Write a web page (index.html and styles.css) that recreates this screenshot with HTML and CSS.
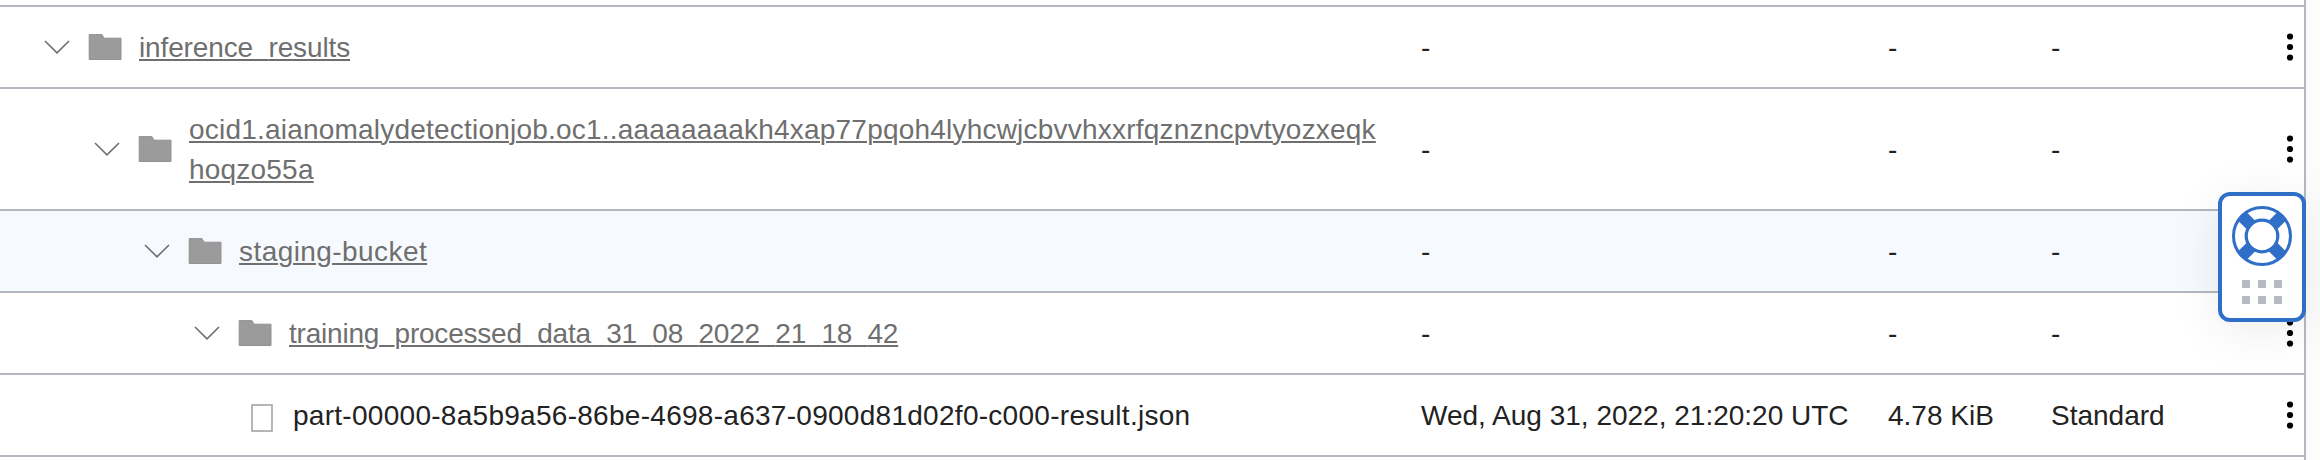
FILE: index.html
```html
<!DOCTYPE html>
<html lang="en">
<head>
<meta charset="utf-8">
<title>Bucket objects</title>
<link rel="stylesheet" href="styles.css">
</head>
<body>
<svg class="defs" aria-hidden="true">
  <symbol id="chevron" viewBox="0 0 26 14"><path d="M1 1 L13 12.8 L25 1" fill="none" stroke="#6f6f6f" stroke-width="1.6"/></symbol>
  <symbol id="folder" viewBox="0 0 34 28"><path d="M1.2 1.6 H14 L16 5.2 H33 V26.5 H1.2 Z" fill="#9b9b9b" stroke="#929292" stroke-width="1"/></symbol>
  <symbol id="file" viewBox="0 0 22 28"><rect x="1" y="1" width="20" height="26" fill="#fff" stroke="#a4a4a4" stroke-width="1.6"/></symbol>
  <symbol id="kebab" viewBox="0 0 8 30"><circle cx="4" cy="4.5" r="3.1"/><circle cx="4" cy="15" r="3.1"/><circle cx="4" cy="25.5" r="3.1"/></symbol>
</svg>
<main class="table">
  <div class="row">
    <div class="name level-1"><svg class="chevron"><use href="#chevron"/></svg><svg class="folder"><use href="#folder"/></svg><a class="link results">inference<span class="us">_</span>results</a></div>
    <span class="cell">-</span><span class="cell">-</span><span class="cell">-</span><svg class="kebab"><use href="#kebab"/></svg>
  </div>
  <div class="row">
    <div class="name level-2"><svg class="chevron"><use href="#chevron"/></svg><svg class="folder"><use href="#folder"/></svg><a class="link job">ocid1.aianomalydetectionjob.oc1..aaaaaaaakh4xap77pqoh4lyhcwjcbvvhxxrfqznzncpvtyozxeqk<br>hoqzo55a</a></div>
    <span class="cell">-</span><span class="cell">-</span><span class="cell">-</span><svg class="kebab"><use href="#kebab"/></svg>
  </div>
  <div class="row hovered">
    <div class="name level-3"><svg class="chevron"><use href="#chevron"/></svg><svg class="folder"><use href="#folder"/></svg><a class="link staging">staging-bucket</a></div>
    <span class="cell">-</span><span class="cell">-</span><span class="cell">-</span><svg class="kebab"><use href="#kebab"/></svg>
  </div>
  <div class="row">
    <div class="name level-4"><svg class="chevron"><use href="#chevron"/></svg><svg class="folder"><use href="#folder"/></svg><a class="link training">training<span class="us">_</span>processed<span class="us">_</span>data<span class="us">_</span>31<span class="us">_</span>08<span class="us">_</span>2022<span class="us">_</span>21<span class="us">_</span>18<span class="us">_</span>42</a></div>
    <span class="cell">-</span><span class="cell">-</span><span class="cell">-</span><svg class="kebab"><use href="#kebab"/></svg>
  </div>
  <div class="row">
    <div class="name level-5"><svg class="file"><use href="#file"/></svg><span class="filename">part-00000-8a5b9a56-86be-4698-a637-0900d81d02f0-c000-result.json</span></div>
    <span class="cell">Wed, Aug 31, 2022, 21:20:20 UTC</span><span class="cell">4.78 KiB</span><span class="cell">Standard</span><svg class="kebab"><use href="#kebab"/></svg>
  </div>
</main>
<aside class="help">
  <svg class="buoy" viewBox="-30 -30 60 60">
    <circle r="28.5" fill="#fff" stroke="#2f6fc8" stroke-width="3"/>
    <path d="M-19.8 -19.8 L19.8 19.8 M19.8 -19.8 L-19.8 19.8" stroke="#2f6fc8" stroke-width="12"/>
    <circle r="15.8" fill="#fff" stroke="#2f6fc8" stroke-width="3.2"/>
  </svg>
  <div class="grip"><i></i><i></i><i></i><i></i><i></i><i></i></div>
</aside>
</body>
</html>
```

FILE: styles.css
```css
* { box-sizing: border-box; }
html, body { margin: 0; }
body {
  width: 2320px;
  height: 460px;
  overflow: hidden;
  background: #fcfcfc;
  color: #222;
  font: 28px/40px "Liberation Sans", Arial, sans-serif;
}
.defs { position: absolute; width: 0; height: 0; }
.table {
  width: 2306px;
  height: 460px;
  padding-top: 5px;
  background: #fff;
  border-right: 2px solid #b3b7bf;
}
.row {
  display: grid;
  grid-template-columns: 1421px 467px 163px 235px 8px;
  align-items: center;
  padding: 21px 0 19px;
  border-top: 2px solid #b3b7bf;
}
.row:last-child { border-bottom: 2px solid #b3b7bf; }
.hovered { background: #f6fafe; }
.name { display: flex; align-items: center; white-space: nowrap; }
.level-1 { padding-left: 44px; }
.level-2 { padding-left: 94px; }
.level-3 { padding-left: 144px; }
.level-4 { padding-left: 194px; }
.level-5 { padding-left: 251px; }
.chevron { flex: none; width: 26px; height: 14px; margin: -2px 18px 0 0; }
.folder { flex: none; width: 34px; height: 28px; margin: -2px 17px 0 0; }
.file { flex: none; width: 22px; height: 28px; margin: 4px 20px 0 0; }
.link {
  color: #6f6f6f;
  text-decoration: underline #6f6f6f;
  text-decoration-thickness: 2px;
  text-underline-offset: 2px;
}
/* The link underline stands in for the underscore strokes. */
.us { color: transparent; }
.results { letter-spacing: -0.13px; }
.job { letter-spacing: 0.21px; }
.staging { letter-spacing: 0.43px; }
.training { letter-spacing: -0.21px; }
.filename { letter-spacing: 0.28px; }
.cell { white-space: nowrap; }
.kebab { width: 8px; height: 30px; margin-top: -2px; }
.help {
  position: absolute;
  left: 2218px;
  top: 192px;
  width: 88px;
  height: 130px;
  padding-top: 10px;
  display: flex;
  flex-direction: column;
  align-items: center;
  gap: 14px;
  background: #fff;
  border: 4px solid #2f6fc8;
  border-radius: 12px;
  box-shadow: 0 8px 50px rgba(0, 0, 0, 0.08);
}
.buoy { width: 60px; height: 60px; }
.grip { display: grid; grid-template-columns: repeat(3, 8px); gap: 8px; }
.grip i { height: 8px; background: #b6bac1; }
```
